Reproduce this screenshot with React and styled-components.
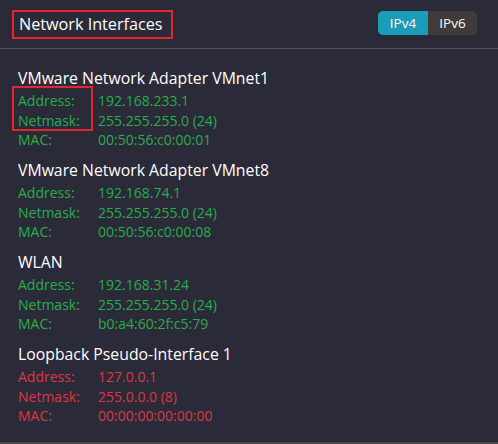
import React from "react";
import styled, { createGlobalStyle } from "styled-components";

const Global = createGlobalStyle`
  html, body {
    margin: 0;
    padding: 0;
    background: #2b2a38;
  }
  body {
    font-family: "Open Sans", "Noto Sans", sans-serif;
    color: #fff;
  }
`;

const Panel = styled.div`
  width: 498px;
  height: 444px;
  box-sizing: border-box;
  background: #2b2a38;
  border-bottom: 2px solid #4a4950;
  display: flex;
  flex-direction: column;
`;

const Header = styled.div`
  height: 49px;
  box-sizing: border-box;
  border-bottom: 1px solid #54535b;
  display: flex;
  align-items: flex-start;
  justify-content: space-between;
  padding: 10px 21px 0 12px;
`;

const Title = styled.h1`
  margin: 0;
  height: 29px;
  box-sizing: border-box;
  border: 2px solid #e3262e;
  padding: 0 8px 0 5px;
  font-size: 16.2px;
  font-weight: 400;
  line-height: 24px;
  color: #fff;
`;

const Toggle = styled.div`
  display: flex;
  margin-top: 1px;
  border-radius: 5px;
  overflow: hidden;
`;

const ToggleButton = styled.button`
  border: none;
  width: ${(p) => p.w}px;
  height: 24px;
  padding: 0;
  font-family: inherit;
  font-size: 13.5px;
  color: #fff;
  background: ${(p) => (p.active ? "#1a9cba" : "#403b3a")};
`;

const List = styled.div`
  display: flex;
  flex-direction: column;
  gap: 10.5px;
  padding: 19px 0 0 18px;
`;

const Section = styled.div`
  display: flex;
  flex-direction: column;
`;

const Name = styled.div`
  font-size: 15.8px;
  line-height: 20px;
  color: #fff;
  margin-bottom: 3px;
`;

const Rows = styled.div`
  position: relative;
  display: grid;
  grid-template-columns: 80px auto;
  font-size: 14px;
  line-height: 19.5px;
  color: ${(p) => (p.bad ? "#dc3841" : "#27ae4b")};
`;

const Mark = styled.div`
  position: absolute;
  left: -6px;
  top: -5px;
  width: 81px;
  height: 45px;
  box-sizing: border-box;
  border: 2px solid #e3262e;
  pointer-events: none;
`;

const interfaces = [
  {
    name: "VMware Network Adapter VMnet1",
    address: "192.168.233.1",
    netmask: "255.255.255.0 (24)",
    mac: "00:50:56:c0:00:01",
    marked: true,
  },
  {
    name: "VMware Network Adapter VMnet8",
    address: "192.168.74.1",
    netmask: "255.255.255.0 (24)",
    mac: "00:50:56:c0:00:08",
  },
  {
    name: "WLAN",
    address: "192.168.31.24",
    netmask: "255.255.255.0 (24)",
    mac: "b0:a4:60:2f:c5:79",
  },
  {
    name: "Loopback Pseudo-Interface 1",
    address: "127.0.0.1",
    netmask: "255.0.0.0 (8)",
    mac: "00:00:00:00:00:00",
    bad: true,
  },
];

export default function App() {
  return (
    <>
      <Global />
      <Panel>
        <Header>
          <Title>Network Interfaces</Title>
          <Toggle>
            <ToggleButton active w={50}>IPv4</ToggleButton>
            <ToggleButton w={49}>IPv6</ToggleButton>
          </Toggle>
        </Header>
        <List>
          {interfaces.map((it) => (
            <Section key={it.name}>
              <Name>{it.name}</Name>
              <Rows bad={it.bad}>
                {it.marked && <Mark />}
                <span>Address:</span>
                <span>{it.address}</span>
                <span>Netmask:</span>
                <span>{it.netmask}</span>
                <span>MAC:</span>
                <span>{it.mac}</span>
              </Rows>
            </Section>
          ))}
        </List>
      </Panel>
    </>
  );
}
